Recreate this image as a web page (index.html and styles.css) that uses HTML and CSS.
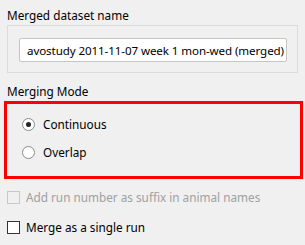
FILE: index.html
```html
<!doctype html>
<html>
<head>
    <meta charset="utf-8">
    <title>Merge datasets</title>
    <link rel="stylesheet" href="styles.css">
</head>
<body>
<div class="panel">
    <div class="caption cap-name">Merged dataset name</div>
    <div class="group">
        <div class="textbox"><span>avostudy 2011-11-07 week 1 mon-wed (merged)</span></div>
    </div>

    <div class="caption cap-mode">Merging Mode</div>
    <div class="highlight">
        <label class="radio"><i class="dot on"></i>Continuous</label>
        <label class="radio"><i class="dot"></i>Overlap</label>
    </div>

    <label class="check off"><i class="box"></i>Add run number as suffix in animal names</label>
    <label class="check"><i class="box"></i>Merge as a single run</label>
</div>
</body>
</html>
```

FILE: styles.css
```css
html, body { margin: 0; padding: 0; background: #f0f0f0; }
body { font-family: "Segoe UI", "Noto Sans", "Open Sans", sans-serif; font-size: 11.75px; color: #000; }
.panel { width: 305px; height: 245px; overflow: hidden; }

.caption { height: 16px; line-height: 16px; padding-left: 7px; }
.cap-name { margin-top: 7px; }
.cap-mode { margin-top: 10px; }

.group { margin: 2px 0 0 7px; width: 291px; height: 48px; border: 1px solid #dcdcdc; padding: 12px 0 0 11px; box-sizing: border-box; }
.textbox { width: 268px; height: 24px; box-sizing: border-box; border: 1px solid #c5c5c5; border-radius: 2px; background: #fff;
           display: flex; justify-content: flex-end; align-items: center; overflow: hidden; white-space: nowrap; padding-right: 2px; }
.textbox span { font-size: 11.6px; letter-spacing: -0.1px; }

.highlight { margin: 2px 0 0 4px; width: 299px; height: 78px; box-sizing: border-box; border: 3px solid #ff0000;
             padding: 12px 0 0 15px; display: flex; flex-direction: column; gap: 12px; }
.radio { display: flex; align-items: center; height: 16px; }
.dot { width: 13px; height: 13px; box-sizing: border-box; border: 1px solid #8a8a8a; border-radius: 50%; background: #fff;
       margin-right: 8px; display: flex; align-items: center; justify-content: center; }
.dot.on::after { content: ""; width: 5px; height: 5px; border-radius: 50%; background: #222; }

.check { display: flex; align-items: center; height: 16px; padding-left: 7px; margin-top: 10px; }
.check + .check { margin-top: 14px; }
.box { width: 13px; height: 13px; box-sizing: border-box; border: 1px solid #333; background: #fff; margin-right: 6px; }
.check.off { color: #a0a0a0; }
.check.off .box { border-color: #c8c8c8; background: #f0f0f0; }
```
